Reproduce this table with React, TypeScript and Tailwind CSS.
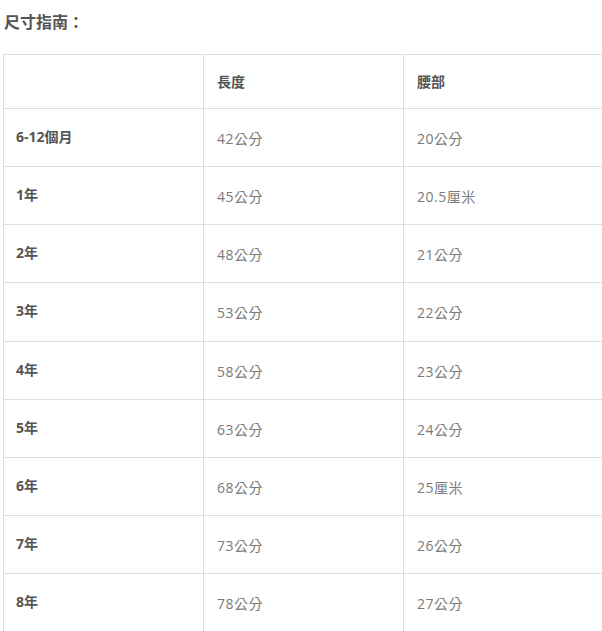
const rows: [string, string, string][] = [
  ['6-12個月', '42公分', '20公分'],
  ['1年', '45公分', '20.5厘米'],
  ['2年', '48公分', '21公分'],
  ['3年', '53公分', '22公分'],
  ['4年', '58公分', '23公分'],
  ['5年', '63公分', '24公分'],
  ['6年', '68公分', '25厘米'],
  ['7年', '73公分', '26公分'],
  ['8年', '78公分', '27公分'],
];

const font = { fontFamily: '"Open Sans", "Noto Sans CJK TC", sans-serif' };

export default function App() {
  return (
    <div className="w-[602px] h-[631px] overflow-hidden bg-white pl-[3px]" style={font}>
      {/* title */}
      <h2 className="pt-[12px] pl-[1px] h-[54px] text-[16px] leading-[20px] font-bold text-[#555]">尺寸指南：</h2>

      {/* size table */}
      <div className="grid grid-cols-[200px_200px_200px] w-[601px] border-l border-t border-[#ddd]">
        <div className="h-[54px] border-r border-b border-[#ddd]" />
        <div className="h-[54px] border-r border-b border-[#ddd] pl-[13px] flex items-center text-[14px] font-bold text-[#555]">長度</div>
        <div className="h-[54px] border-r border-b border-[#ddd] pl-[13px] flex items-center text-[14px] font-bold text-[#555]">腰部</div>
        {rows.map(([label, length, waist]) => (
          <>
            <div key={label} className="h-[58.125px] border-r border-b border-[#ddd] pl-[12px] pb-[2px] flex items-center text-[14px] font-bold text-[#555]">
              {label}
            </div>
            <div className="h-[58.125px] border-r border-b border-[#ddd] pl-[13px] pt-[2px] flex items-center text-[14px] tracking-[0.5px] text-[#7a7a7a]">{length}</div>
            <div className="h-[58.125px] border-r border-b border-[#ddd] pl-[13px] pt-[2px] flex items-center text-[14px] tracking-[0.5px] text-[#7a7a7a]">{waist}</div>
          </>
        ))}
      </div>
    </div>
  );
}
